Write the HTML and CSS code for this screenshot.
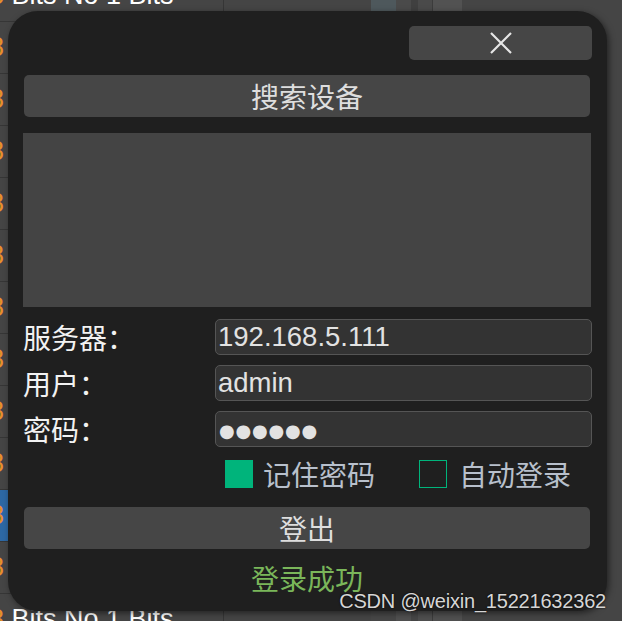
FILE: index.html
```html
<!DOCTYPE html>
<html lang="zh-CN">
<head>
<meta charset="utf-8">
<title>登录</title>
<link rel="stylesheet" href="styles.css">
</head>
<body>
<div class="table">
  <div class="row row-top">
    <div class="cell c-name"><span class="num">8</span> Bits No 1 Bits</div>
    <div class="cell c-a"></div>
    <div class="cell c-b"></div>
    <div class="cell c-c"></div>
    <div class="cell c-d"></div>
    <div class="cell c-e"></div>
    <div class="cell c-f"></div>
  </div>
  <div class="row"><div class="cell c-name"><span class="num">8</span> Bits No 1 Bits</div><div class="cell c-a"></div><div class="cell c-b"></div><div class="cell c-c"></div><div class="cell c-d"></div><div class="cell c-e"></div><div class="cell c-f"></div></div>
  <div class="row"><div class="cell c-name"><span class="num">8</span> Bits No 1 Bits</div><div class="cell c-a"></div><div class="cell c-b"></div><div class="cell c-c"></div><div class="cell c-d"></div><div class="cell c-e"></div><div class="cell c-f"></div></div>
  <div class="row"><div class="cell c-name"><span class="num">8</span> Bits No 1 Bits</div><div class="cell c-a"></div><div class="cell c-b"></div><div class="cell c-c"></div><div class="cell c-d"></div><div class="cell c-e"></div><div class="cell c-f"></div></div>
  <div class="row"><div class="cell c-name"><span class="num">8</span> Bits No 1 Bits</div><div class="cell c-a"></div><div class="cell c-b"></div><div class="cell c-c"></div><div class="cell c-d"></div><div class="cell c-e"></div><div class="cell c-f"></div></div>
  <div class="row"><div class="cell c-name"><span class="num">8</span> Bits No 1 Bits</div><div class="cell c-a"></div><div class="cell c-b"></div><div class="cell c-c"></div><div class="cell c-d"></div><div class="cell c-e"></div><div class="cell c-f"></div></div>
  <div class="row"><div class="cell c-name"><span class="num">8</span> Bits No 1 Bits</div><div class="cell c-a"></div><div class="cell c-b"></div><div class="cell c-c"></div><div class="cell c-d"></div><div class="cell c-e"></div><div class="cell c-f"></div></div>
  <div class="row"><div class="cell c-name"><span class="num">8</span> Bits No 1 Bits</div><div class="cell c-a"></div><div class="cell c-b"></div><div class="cell c-c"></div><div class="cell c-d"></div><div class="cell c-e"></div><div class="cell c-f"></div></div>
  <div class="row"><div class="cell c-name"><span class="num">8</span> Bits No 1 Bits</div><div class="cell c-a"></div><div class="cell c-b"></div><div class="cell c-c"></div><div class="cell c-d"></div><div class="cell c-e"></div><div class="cell c-f"></div></div>
  <div class="row"><div class="cell c-name"><span class="num">8</span> Bits No 1 Bits</div><div class="cell c-a"></div><div class="cell c-b"></div><div class="cell c-c"></div><div class="cell c-d"></div><div class="cell c-e"></div><div class="cell c-f"></div></div>
  <div class="row row-selected"><div class="cell c-name"><span class="num">8</span> Bits No 1 Bits</div><div class="cell c-a"></div><div class="cell c-b"></div><div class="cell c-c"></div><div class="cell c-d"></div><div class="cell c-e"></div><div class="cell c-f"></div></div>
  <div class="row"><div class="cell c-name"><span class="num">8</span> Bits No 1 Bits</div><div class="cell c-a"></div><div class="cell c-b"></div><div class="cell c-c"></div><div class="cell c-d"></div><div class="cell c-e"></div><div class="cell c-f"></div></div>
  <div class="row"><div class="cell c-name"><span class="num">8</span> Bits No 1 Bits</div><div class="cell c-a"></div><div class="cell c-b"></div><div class="cell c-c"></div><div class="cell c-d"></div><div class="cell c-e"></div><div class="cell c-f"></div></div>
</div>

<div class="dialog">
  <div class="close-row">
    <button class="close-btn" aria-label="关闭">
      <svg width="22" height="22" viewBox="0 0 22 22"><path d="M1 1 L21 21 M21 1 L1 21" stroke="#e6e6e6" stroke-width="2.2" fill="none"/></svg>
    </button>
  </div>
  <button class="btn btn-search">搜索设备</button>
  <div class="device-list"></div>
  <div class="form">
    <div class="label">服务器：</div>
    <input class="field" type="text" value="192.168.5.111">
    <div class="label">用户：</div>
    <input class="field" type="text" value="admin">
    <div class="label">密码：</div>
    <div class="field field-pass">●●●●●●</div>
  </div>
  <div class="checks">
    <div class="check"><span class="box box-on"></span><span class="check-text">记住密码</span></div>
    <div class="check check-auto"><span class="box box-off"></span><span class="check-text">自动登录</span></div>
  </div>
  <button class="btn btn-logout">登出</button>
  <div class="status">登录成功</div>
</div>

<div class="watermark">CSDN @weixin_15221632362</div>
</body>
</html>
```

FILE: styles.css
```css
html, body {
  margin: 0;
  padding: 0;
}
body {
  width: 622px;
  height: 621px;
  overflow: hidden;
  position: relative;
  background: #454545;
  font-family: "Liberation Sans", "Noto Sans CJK SC", sans-serif;
}

/* background table */
.table {
  display: flex;
  flex-direction: column;
  width: 462px;
  margin-top: -30px;
}
.row {
  display: flex;
  flex: 0 0 52px;
  height: 52px;
  box-sizing: border-box;
  border-bottom: 1px solid #363636;
}
.row-selected {
  background: #2d68a4;
}
.cell {
  box-sizing: border-box;
  height: 100%;
}
.c-name {
  width: 224px;
  border-right: 1px solid #363636;
  color: #ffffff;
  font-size: 27px;
  line-height: 51px;
  white-space: nowrap;
  overflow: hidden;
}
.num {
  color: #e8902a;
  margin-left: -11px;
}
.c-a { width: 147px; }
.c-b { width: 25px; background: #474747; }
.c-c { width: 15px; background: #505050; }
.c-d { width: 7px; background: #464646; }
.c-e { width: 15px; background: #4f4f4f; border-right: 1px solid #3c3c3c; }
.c-f { width: 29px; background: #505050; }
.row-top .c-b { background: #4e585c; }
.row-top .c-c { background: #4a4a4a; }
.row-top .c-d { background: #404040; }
.row-top .c-e { background: #4a4a4a; }
.row-top .c-f { background: #525252; }

/* dialog */
.dialog {
  position: absolute;
  left: 8px;
  top: 11px;
  width: 599px;
  height: 600px;
  box-sizing: border-box;
  padding: 15px 16px 0 15px;
  background: #1f1f1f;
  border-radius: 30px;
  box-shadow: 2px 2px 6px rgba(0, 0, 0, 0.5);
  display: flex;
  flex-direction: column;
}
button {
  font-family: "Noto Sans CJK SC", sans-serif;
  border: none;
  padding: 0;
  margin: 0;
}
.close-row {
  display: flex;
  justify-content: flex-end;
}
.close-btn {
  width: 183px;
  height: 34px;
  margin-right: -1px;
  background: #464646;
  border-radius: 5px;
  display: flex;
  align-items: center;
  justify-content: center;
}
.close-btn svg {
  display: block;
  margin-top: -1px;
}
.btn {
  height: 42px;
  margin-left: 1px;
  margin-right: 1px;
  background: #464646;
  border-radius: 5px;
  color: #dedede;
  font-size: 28px;
  line-height: 42px;
  text-align: center;
}
.btn-search {
  margin-top: 15px;
}
.device-list {
  margin-top: 16px;
  height: 174px;
  background: #444444;
}

.form {
  margin-top: 12px;
  display: grid;
  grid-template-columns: 192px 1fr;
  grid-auto-rows: 36px;
  row-gap: 10px;
}
.label {
  font-family: "Noto Sans CJK SC", sans-serif;
  font-size: 28px;
  line-height: 36px;
  height: 36px;
  color: #f2f2f2;
  white-space: nowrap;
}
.field {
  height: 36px;
  margin: 0 -1px 0 0;
  box-sizing: border-box;
  border: 1px solid #555555;
  border-radius: 5px;
  background: #333333;
  color: #e2e2e2;
  font-family: "Liberation Sans", sans-serif;
  font-size: 27.5px;
  padding: 0 2px;
  outline: none;
  width: auto;
  min-width: 0;
}
.field-pass {
  display: flex;
  align-items: center;
  font-family: "DejaVu Sans", sans-serif;
  font-size: 18px;
  letter-spacing: 0.8px;
  padding-left: 3px;
  padding-top: 3px;
  color: #e2e2e2;
}

.checks {
  margin-top: 13px;
  height: 28px;
  display: flex;
  align-items: center;
  padding-left: 202px;
}
.check {
  display: flex;
  align-items: center;
  gap: 10px;
}
.check-auto {
  margin-left: 44px;
  gap: 12px;
}
.box {
  display: block;
  width: 28px;
  height: 28px;
  box-sizing: border-box;
}
.box-on {
  background: #00b47b;
}
.box-off {
  border: 1px solid #00b47b;
}
.check-text {
  font-family: "Noto Sans CJK SC", sans-serif;
  font-size: 28px;
  line-height: 28px;
  color: #b8c0cc;
}

.btn-logout {
  margin-top: 19px;
}
.status {
  margin-top: 9px;
  text-align: center;
  font-family: "Noto Sans CJK SC", sans-serif;
  font-size: 28px;
  color: #7ab65a;
}

.watermark {
  position: absolute;
  right: 16px;
  top: 591px;
  font-family: "Liberation Sans", sans-serif;
  font-size: 20px;
  line-height: 20px;
  letter-spacing: -0.2px;
  color: #d6d6d6;
  text-shadow: 0 0 2px rgba(0, 0, 0, 0.9);
  white-space: nowrap;
}
```
